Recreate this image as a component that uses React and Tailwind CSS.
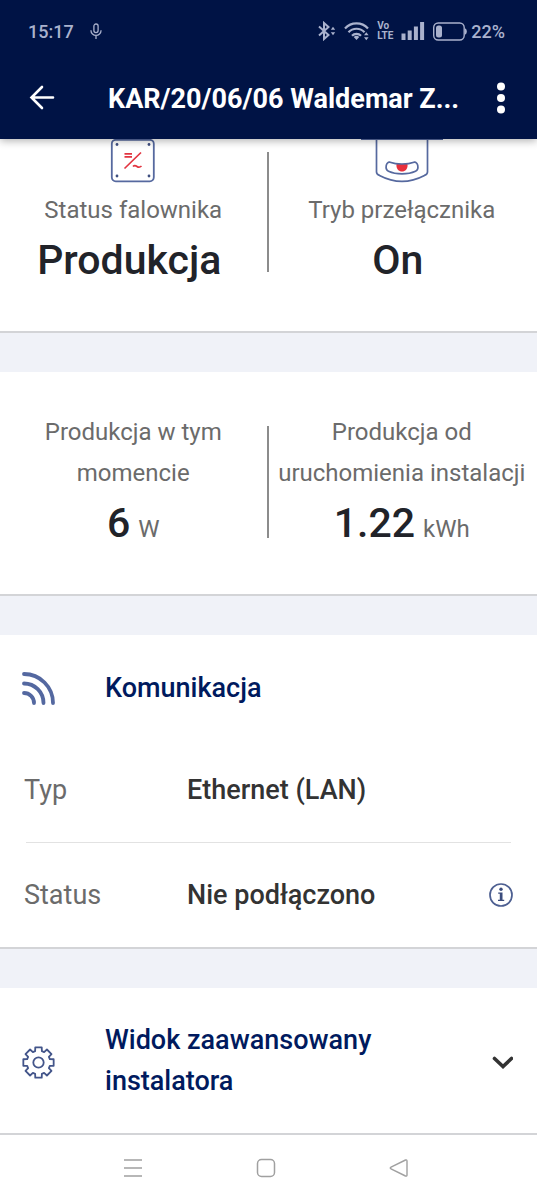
import React from "react";

function StatusBar() {
  return (
    <div className="flex h-[62px] items-center pr-8 pl-7 text-[#aab2cd]">
      <span className="text-[18px] font-medium">15:17</span>
      <svg className="ml-4 h-4 w-3" viewBox="0 0 12 16" fill="none" stroke="currentColor" strokeWidth="1.3" aria-hidden="true">
        <rect x="3.9" y="1" width="4.2" height="8.6" rx="2.1" />
        <path d="M1 7.2v.6a5 4.6 0 0 0 10 0v-.6M6 12.4V16" />
      </svg>
      <div className="ml-auto flex items-center">
        <svg className="h-5 w-[18px]" viewBox="0 0 18 20" fill="none" stroke="currentColor" strokeWidth="2" aria-hidden="true">
          <path d="M1 5.5l9.5 8.5L6 18V2l4.5 4L1 14.5" />
          <path d="M12.8 8.8L15 5.8l2.2 3zM12.8 11.2L15 14.2l2.2-3z" fill="currentColor" stroke="none" />
        </svg>
        <svg className="ml-2 h-5 w-[25px]" viewBox="0 0 25 20" fill="none" stroke="currentColor" strokeWidth="2.2" aria-hidden="true">
          <path d="M1 7.5a15.5 15.5 0 0 1 23 0M4.5 11.3a10.8 10.8 0 0 1 16 0M8 14.8a6.2 6.2 0 0 1 9 0" />
          <path d="M12.5 19l-2.8-3a4 4 0 0 1 5.6 0zM20 14.2l2.3-3 2.3 3zM20 16.2l2.3 3 2.3-3z" fill="currentColor" stroke="none" />
        </svg>
        <span className="ml-2 flex flex-col items-start text-[10px] leading-[10px] font-bold">
          <span>Vo</span>
          <span>LTE</span>
        </span>
        <svg className="ml-2 h-[18px] w-6" viewBox="0 0 24 18" fill="currentColor" aria-hidden="true">
          <rect x="0.5" y="11.5" width="4" height="6.5" />
          <rect x="6.7" y="8.5" width="4" height="9.5" />
          <rect x="12.9" y="4.5" width="4" height="13.5" />
          <rect x="19.1" y="0" width="4" height="18" />
        </svg>
        <svg className="ml-2 h-[19px] w-[34px]" viewBox="0 0 34 19" aria-hidden="true">
          <rect x="0.7" y="1" width="30.5" height="17" rx="4.5" fill="none" stroke="currentColor" strokeWidth="1.4" />
          <rect x="3" y="3.5" width="6" height="12" rx="2.5" fill="currentColor" />
          <path d="M32 6.5c2.4 0 2.4 6 0 6z" fill="currentColor" />
        </svg>
        <span className="ml-1 text-[18px] font-medium">22%</span>
      </div>
    </div>
  );
}

function Header() {
  return (
    <header className="relative z-10 bg-[#001345] shadow-[0_2px_8px_rgba(0,0,0,0.3)]">
      <StatusBar />
      <div className="flex h-[77px] items-center pr-6 pb-1.5 pl-7">
        <button type="button" aria-label="Wstecz" className="shrink-0 text-white">
          <svg className="h-7 w-7" viewBox="0 0 28 28" fill="none" stroke="currentColor" strokeWidth="2.6" strokeLinecap="round">
            <path d="M25 13.500H3.500M14 3L3.500 13.500 14 24" />
          </svg>
        </button>
        <h1 className="ml-[52px] min-w-0 flex-1 truncate pt-1 text-[27px] font-bold text-white">KAR/20/06/06 Waldemar Z...</h1>
        <button type="button" aria-label="Menu" className="ml-4 shrink-0 text-white">
          <svg className="h-8 w-6" viewBox="0 0 24 32" fill="currentColor">
            <circle cx="12" cy="4.5" r="4" />
            <circle cx="12" cy="16" r="4" />
            <circle cx="12" cy="27.5" r="4" />
          </svg>
        </button>
      </div>
    </header>
  );
}

function InverterIcon() {
  return (
    <svg className="h-[51px] w-12" viewBox="0 0 48 51" fill="none" aria-hidden="true">
      <rect x="2.8" y="0.8" width="42" height="41.5" rx="4" stroke="#56699f" strokeWidth="1.8" />
      <g fill="#3f4f80">
        <circle cx="8" cy="5.5" r="1.4" />
        <circle cx="40" cy="5.5" r="1.4" />
        <circle cx="8" cy="37" r="1.4" />
        <circle cx="40" cy="37" r="1.4" />
      </g>
      <path d="M15.5 14.8H23M15.5 17.8H23M15.5 29.5L32 13.5M24 27.5c1.4-1.5 2.6-1 4 0s2.6 1.3 4.5-.5" stroke="#e23440" strokeWidth="1.7" />
    </svg>
  );
}

function SwitchIcon() {
  return (
    <svg className="h-[51px] w-[84px]" viewBox="0 0 84 51" fill="none" stroke="#56699f" strokeWidth="1.7" aria-hidden="true">
      <path d="M1 .5h82" strokeWidth="1" />
      <path d="M16.5 0v33c0 2 1 2.6 3 3.4C34 44 50 44 64.5 36.4c2-.8 3-1.400 3-3.4V0" />
      <path d="M36.500 25h11c1.300 10-12.300 10-11 0z" fill="#e8303c" stroke="none" />
      <path d="M30 23.200c6.500 2.400 17.500 2.400 24 0 4-.8 5.600 7 1.500 9-7.500 3.500-19.500 3.500-27 0-4.100-2-2.500-9.800 1.500-9z" />
    </svg>
  );
}

function Metric({ icon, label, value, unit }) {
  return (
    <div className="flex flex-1 basis-0 flex-col items-center text-center">
      {icon}
      <p className="text-[24px] leading-[41px] text-[#6b6b6b]">{label}</p>
      <p className="text-[41px] leading-[58px] font-medium text-[#212329]">
        <span className="mr-2">{value}</span>
        {unit && <span className="text-[24px] leading-none font-normal text-[#6b6b6b]">{unit}</span>}
      </p>
    </div>
  );
}

function Gap() {
  return <div className="h-[41px] border-t-2 border-[#d3d4d7] bg-[#f0f2f8]" />;
}

function Row({ label, children }) {
  return (
    <div className="flex h-[104px] items-center">
      <dt className="w-[163px] shrink-0 text-[27px] text-[#6b6b6b]">{label}</dt>
      <dd className="flex flex-1 items-center justify-between text-[27px] font-medium text-[#333333]">{children}</dd>
    </div>
  );
}

function gearPath(cx, cy) {
  const pts = [];
  for (let i = 0; i < 8; i++) {
    const mid = (i * Math.PI) / 4 - Math.PI / 2;
    for (const [r, a] of [[11.8, -0.29], [15.5, -0.21], [15.5, 0.21], [11.8, 0.29]]) {
      pts.push(`${(cx + r * Math.cos(mid + a)).toFixed(2)} ${(cy + r * Math.sin(mid + a)).toFixed(2)}`);
    }
  }
  return `M${pts.join("L")}Z`;
}

export default function App() {
  return (
    <div className="flex min-h-screen flex-col bg-white font-['Roboto',sans-serif]">
      <Header />
      <main>
        <section className="flex pr-0.5 pb-[42px]">
          <Metric icon={<InverterIcon />} label="Status falownika" value="Produkcja" />
          <div className="mt-[13px] h-[120px] w-0.5 bg-[#8c8c8c]" />
          <Metric icon={<SwitchIcon />} label="Tryb przełącznika" value="On" />
        </section>
        <Gap />
        <section className="flex items-center pt-10 pr-0.5 pb-[42px]">
          <Metric label={<>Produkcja w tym<br />momencie</>} value="6" unit="W" />
          <div className="h-28 w-0.5 bg-[#8c8c8c]" />
          <Metric label={<>Produkcja od<br />uruchomienia instalacji</>} value="1.22" unit="kWh" />
        </section>
        <Gap />
        <section>
          <div className="flex h-[103px] items-center pt-1 pl-[22px]">
            <svg className="h-[33px] w-[33px] shrink-0" viewBox="0 0 33 33" fill="none" stroke="#5468a0" strokeWidth="3.8" strokeLinecap="round" aria-hidden="true">
              <path d="M2 2A29 29 0 0 1 31 31M2 11.5A19.5 19.5 0 0 1 21.5 31M2 21A10 10 0 0 1 12 31" />
            </svg>
            <h2 className="ml-[50px] text-[27px] leading-[41px] font-medium text-[#001a5e]">Komunikacja</h2>
          </div>
          <dl className="px-6">
            <Row label="Typ">Ethernet (LAN)</Row>
            <div className="mx-0.5 h-px bg-[#e2e2e2]" />
            <Row label="Status">
              Nie podłączono
              <button type="button" aria-label="Informacje">
                <svg className="h-6 w-6" viewBox="0 0 24 24" fill="none">
                  <circle cx="12" cy="12" r="11" stroke="#4d5f91" strokeWidth="1.7" />
                  <circle cx="12" cy="6.3" r="1.7" fill="#3b4c7d" />
                  <path d="M9.2 9.5h4.3v7.2h1.7v1.3H9v-1.3h1.8v-5.9H9.2z" fill="#3b4c7d" />
                </svg>
              </button>
            </Row>
          </dl>
        </section>
        <Gap />
        <section className="border-b-2 border-[#d3d4d7]">
          <button type="button" className="flex h-[145px] w-full items-center pr-6 pl-[22px] text-left">
            <svg className="mt-1 h-[33px] w-[33px] shrink-0" viewBox="0 0 33 33" fill="none" stroke="#43558a" strokeWidth="1.8" strokeLinejoin="round" aria-hidden="true">
              <path d={gearPath(16.5, 16.5)} />
              <circle cx="16.5" cy="16.5" r="5.2" />
            </svg>
            <span className="ml-[50px] max-w-[300px] flex-1 text-[27px] leading-[41px] font-medium text-[#001a5e]">Widok zaawansowany instalatora</span>
            <svg className="mt-1 ml-auto h-[14px] w-[22px] shrink-0" viewBox="0 0 22 14" fill="none" stroke="#333333" strokeWidth="3.6" strokeLinecap="round" aria-hidden="true">
              <path d="M3.5 2.500l8.500 8 8.500-8" />
            </svg>
          </button>
        </section>
      </main>
      <nav className="flex flex-1 items-center justify-around pr-[72px] pl-[67px] text-[#a0a0a0]">
        <button type="button" aria-label="Ostatnie">
          <svg className="h-5 w-5" viewBox="0 0 20 20" fill="none" stroke="currentColor" strokeWidth="1.5">
            <path d="M1 2h18M1 10h18M1 18h18" />
          </svg>
        </button>
        <button type="button" aria-label="Ekran główny">
          <svg className="h-5 w-5" viewBox="0 0 20 20" fill="none" stroke="currentColor" strokeWidth="1.5">
            <rect x="1.5" y="1.5" width="17" height="17" rx="4" />
          </svg>
        </button>
        <button type="button" aria-label="Cofnij">
          <svg className="h-5 w-5" viewBox="0 0 20 20" fill="none" stroke="currentColor" strokeWidth="1.4" strokeLinejoin="round">
            <path d="M2 9.2L16.5 2c1-.4 1.5 0 1.5 1v14c0 1-.5 1.4-1.5 1L2 10.8c-1-.5-1-1.100 0-1.600z" />
          </svg>
        </button>
      </nav>
    </div>
  );
}
